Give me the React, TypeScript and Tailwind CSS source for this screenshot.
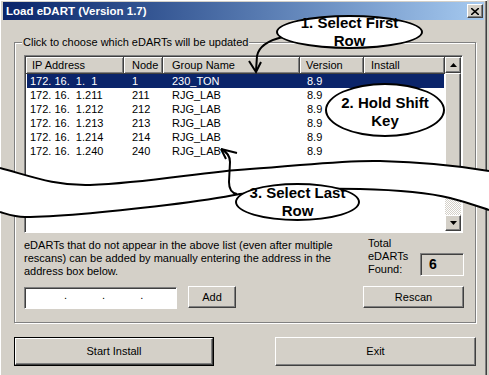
import React from "react";

const rows = [
  { ip: "172. 16.  1.  1", node: "1", group: "230_TON", ver: "8.9", sel: true },
  { ip: "172. 16.  1.211", node: "211", group: "RJG_LAB", ver: "8.9", sel: false },
  { ip: "172. 16.  1.212", node: "212", group: "RJG_LAB", ver: "8.9", sel: false },
  { ip: "172. 16.  1.213", node: "213", group: "RJG_LAB", ver: "8.9", sel: false },
  { ip: "172. 16.  1.214", node: "214", group: "RJG_LAB", ver: "8.9", sel: false },
  { ip: "172. 16.  1.240", node: "240", group: "RJG_LAB", ver: "8.9", sel: false },
];

const raised =
  "bg-[#d4d0c8] border border-white border-r-[#404040] border-b-[#404040] shadow-[inset_-1px_-1px_0_#808080]";
const headCell =
  "flex h-full items-center bg-[#d4d0c8] border-r border-b border-r-[#404040] border-b-[#404040] shadow-[inset_1px_1px_0_#fff,inset_-1px_-1px_0_#808080]";

function Tri({ up }: { up?: boolean }) {
  return (
    <svg width="7" height="4" viewBox="0 0 7 4">
      {up ? <path d="M3.5 0 L7 4 L0 4 Z" fill="#000" /> : <path d="M0 0 L7 0 L3.5 4 Z" fill="#000" />}
    </svg>
  );
}

export default function App() {
  return (
    <div className="relative h-[375px] w-[489px] overflow-hidden bg-[#d4d0c8] font-['Liberation_Sans',Arial,sans-serif] text-[11px] leading-[13px] text-black">
      <div className="flex h-full w-[487px] flex-col pl-[3px] pr-[3px] pt-[2px] shadow-[inset_1px_1px_0_#fff,inset_-1px_0_0_#404040,inset_-2px_0_0_#808080]">
        {/* Title bar */}
        <div className="flex h-[18px] items-center justify-between bg-linear-to-r from-[#0a246a] to-[#a6caf0] pl-[3px] pr-[1px]">
          <span className="text-[11.5px] font-bold text-white">Load eDART (Version 1.7)</span>
          <div className={`flex h-[14px] w-[16px] items-center justify-center ${raised}`}>
            <svg width="8" height="7" viewBox="0 0 8 7">
              <path d="M0 0 L8 7 M8 0 L0 7" stroke="#000" strokeWidth="1.6" />
            </svg>
          </div>
        </div>

        {/* Group box */}
        <div className="relative ml-[11px] mt-[22px] w-[462px] border border-[#808080] pb-[13px] pl-[9px] pr-[11px] pt-[12px] shadow-[inset_1px_1px_0_#fff,1px_1px_0_#fff]">
          <span className="absolute -top-[7px] left-[7px] bg-[#d4d0c8] px-[1px] whitespace-nowrap">
            Click to choose which eDARTs will be updated
          </span>

          {/* List view */}
          <div className="flex h-[178px] w-[439px] border border-[#808080] border-r-white border-b-white bg-white p-[1px] shadow-[inset_1px_1px_0_#404040]">
            <div className="flex flex-1 flex-col">
              <div className="flex h-[17px]">
                <div className={`${headCell} w-[98px] pl-[6px]`}>IP Address</div>
                <div className={`${headCell} w-[39px] pl-[8px]`}>Node</div>
                <div className={`${headCell} w-[137px] pl-[9px]`}>Group Name</div>
                <div className={`${headCell} w-[64px] pl-[6px]`}>Version</div>
                <div className={`${headCell} w-[81px] pl-[7px]`}>Install</div>
              </div>
              <div className="ml-[1px] flex flex-col">
                {rows.map((r) => (
                  <div
                    key={r.ip}
                    className={`flex h-[14px] w-[417px] items-center whitespace-pre ${r.sel ? "bg-[#0a246a] text-white" : ""}`}
                  >
                    <span className="w-[97px] pl-[3px]">{r.ip}</span>
                    <span className="w-[39px] pl-[8px]">{r.node}</span>
                    <span className="w-[137px] pl-[9px]">{r.group}</span>
                    <span className="w-[64px] pl-[7px]">{r.ver}</span>
                  </div>
                ))}
              </div>
            </div>
            {/* Scrollbar */}
            <div className="flex w-[16px] flex-col">
              <div className={`flex h-[16px] items-center justify-center ${raised}`}>
                <Tri up />
              </div>
              <div className={`h-[110px] ${raised}`} />
              <div className="flex-1 bg-[repeating-conic-gradient(#ffffff_0%_25%,#d4d0c8_0%_50%)] bg-[length:2px_2px]" />
              <div className={`flex h-[16px] items-center justify-center ${raised}`}>
                <Tri />
              </div>
            </div>
          </div>

          {/* Lower section */}
          <div className="mt-[6px] flex">
            <div className="flex flex-col">
              <p className="whitespace-nowrap">
                eDARTs that do not appear in the above list (even after multiple
                <br />
                rescans) can be added by manually entering the address in the
                <br />
                address box below.
              </p>
              <div className="mt-[8px] flex items-start">
                <div className="mt-[1px] flex h-[22px] w-[153px] items-center gap-[35px] border border-[#808080] border-r-white border-b-white bg-white pb-[6px] pl-[39px] shadow-[inset_1px_1px_0_#404040]">
                  <span>.</span>
                  <span>.</span>
                  <span>.</span>
                </div>
                <button className={`ml-[11px] h-[22px] w-[48px] ${raised}`}>Add</button>
              </div>
            </div>
            <div className="ml-auto flex w-[101px] flex-col">
              <div className="-mt-[2px] flex items-end">
                <div className="pl-[5px]">
                  Total
                  <br />
                  eDARTs
                  <br />
                  Found:
                </div>
                <div className="ml-auto flex h-[23px] w-[44px] items-center border border-[#808080] border-r-white border-b-white pl-[8px] text-[14px] font-bold shadow-[inset_1px_1px_0_#404040]">
                  6
                </div>
              </div>
              <button className={`mt-[10px] h-[22px] w-full ${raised}`}>Rescan</button>
            </div>
          </div>
        </div>

        {/* Bottom buttons */}
        <div className="ml-[11px] mt-[14px] flex w-[462px] justify-between">
          <div className="h-[29px] w-[200px] border border-black">
            <button className={`h-full w-full ${raised}`}>Start Install</button>
          </div>
          <button className={`h-[29px] w-[201px] ${raised}`}>Exit</button>
        </div>
      </div>

      {/* Annotation overlay: break band and arrows */}
      <svg className="pointer-events-none absolute left-0 top-0" width="489" height="375" viewBox="0 0 489 375">
        <path
          d="M0,168 C30,176 55,186 90,185 C150,183 200,172 250,169 C300,166 340,160 380,161 C420,162 460,166 489,171 L489,210 C480,207 470,203 450,198 C430,193 400,190 360,189 C330,188 280,190 240,194 C220,198 200,201 167,205 C100,213 60,217 25,217 C15,217 10,215 0,212 Z"
          fill="#fff"
        />
        <path
          d="M0,168 C30,176 55,186 90,185 C150,183 200,172 250,169 C300,166 340,160 380,161 C420,162 460,166 489,171"
          fill="none"
          stroke="#000"
          strokeWidth="2"
        />
        <path
          d="M489,210 C480,207 470,203 450,198 C430,193 400,190 360,189 C330,188 280,190 240,194 C220,198 200,201 167,205 C100,213 60,217 25,217 C15,217 10,215 0,212"
          fill="none"
          stroke="#000"
          strokeWidth="2"
        />
        <path d="M283,37 C270,40 259,45 257,56 L256,71" fill="none" stroke="#000" strokeWidth="2" />
        <path d="M249,61 L256,72 L261,62" fill="none" stroke="#000" strokeWidth="2" />
        <path d="M237,194 C231,193 229,189 229,182 L230,162 C230,156 227,152 221,149" fill="none" stroke="#000" strokeWidth="2" />
        <path d="M221,149 L237,153 M221,149 L226,159" fill="none" stroke="#000" strokeWidth="2" />
      </svg>

      <div className="absolute left-[276px] top-[15px] flex h-[34px] w-[147px] items-center justify-center rounded-[50%] border-2 border-black bg-white text-center text-[15px] font-bold leading-[18px]">
        1. Select First
        <br />
        Row
      </div>
      <div className="absolute left-[325px] top-[83px] flex h-[54px] w-[120px] items-center justify-center rounded-[50%] border-2 border-black bg-white pt-[4px] text-center text-[15px] font-bold leading-[18px]">
        2. Hold Shift
        <br />
        Key
      </div>
      <div className="absolute left-[235px] top-[183px] flex h-[38px] w-[125px] items-center justify-center rounded-[50%] border-2 border-black bg-white text-center text-[15px] font-bold leading-[18px]">
        3. Select Last
        <br />
        Row
      </div>
    </div>
  );
}
